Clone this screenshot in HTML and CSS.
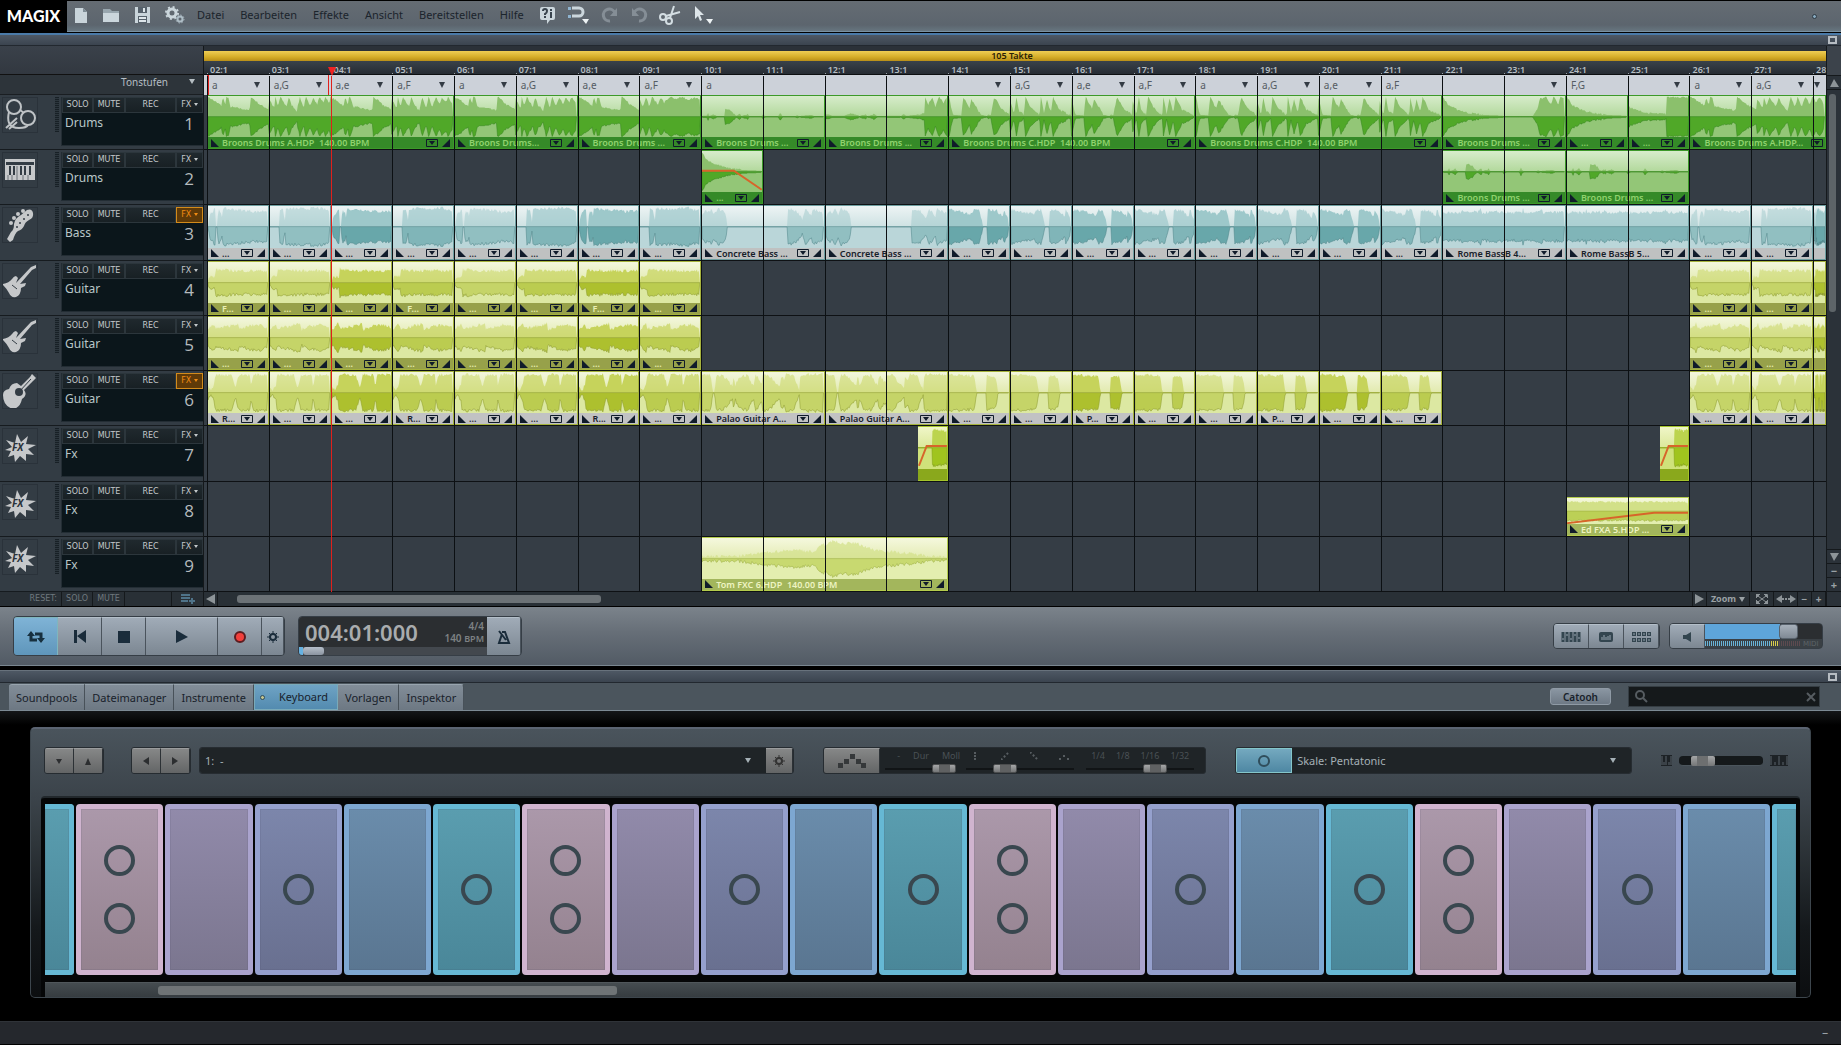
FILE: index.html
```
<!DOCTYPE html>
<html lang="de">
	<head>
		<meta charset="utf-8">
		<title>MAGIX Music Maker</title>
		<link rel="stylesheet" href="styles.css">
	</head>
	<body>
		<header class="menubar">
			<div class="logo">MAGIX</div>
			<div class="menu-tools">
				<button class="tool" aria-label="Neu"><svg width="14" height="17" viewBox="0 0 14 17"><path d="M1 1h8l4 4v11H1z" fill="#c9d4da"/><path d="M9 1v4h4z" fill="#7e8c95"/></svg></button>
				<button class="tool" aria-label="Öffnen"><svg width="18" height="15" viewBox="0 0 18 15"><path d="M1 1h7l2 2h7v3H1z" fill="#98a6ae"/><path d="M1 5h16v9H1z" fill="#cbd6dc"/></svg></button>
				<button class="tool" aria-label="Speichern"><svg width="17" height="18" viewBox="0 0 17 18"><path d="M1 1h15v16H1z" fill="#c9d4da"/><path d="M4 1h9v6H4zM4 10h9v7H4z" fill="#56616b"/><path d="M9 2h2v4H9zM5 11h7v2H5zM5 14h7v2H5z" fill="#dde5e9"/></svg></button>
				<button class="tool" aria-label="Einstellungen"><svg width="20" height="18" viewBox="0 0 20 18" fill="none"><circle cx="7" cy="7" r="4" stroke="#cbd6dc" stroke-width="3"/><circle cx="7" cy="7" r="6" stroke="#cbd6dc" stroke-width="2" stroke-dasharray="2 2.7"/><circle cx="15" cy="13" r="2.500" stroke="#aebdc6" stroke-width="2"/><circle cx="15" cy="13" r="4" stroke="#aebdc6" stroke-dasharray="1.500 1.600"/></svg></button>
			</div>
			<nav class="menus">
				<a href="#">Datei</a>
				<a href="#">Bearbeiten</a>
				<a href="#">Effekte</a>
				<a href="#">Ansicht</a>
				<a href="#">Bereitstellen</a>
				<a href="#">Hilfe</a>
			</nav>
			<div class="menu-tools modes">
				<button class="tool" aria-label="Hilfe"><svg width="17" height="19" viewBox="0 0 17 19"><path d="M3 1h11a2 2 0 0 1 2 2v9a2 2 0 0 1-2 2h-3l-3 4v-4H3a2 2 0 0 1-2-2V3a2 2 0 0 1 2-2z" fill="#cbd6dc"/><path d="M4 5q0-2 2-2t2 2-2 3v1M6 10v2M12 6v6M12 3v2" stroke="#39444e" stroke-width="2" fill="none"/></svg></button>
				<button class="tool" aria-label="Raster"><svg width="23" height="20" viewBox="0 0 23 20"><path d="M5 3h7a4 4 0 0 1 0 8H5" stroke="#cbd6dc" stroke-width="3" fill="none"/><path d="M1 2h3v3H1zM1 10h3v3H1z" fill="#8fb4d0"/><path d="M15 14h7l-3 5z" fill="#eef3f5"/></svg></button>
				<button class="tool" aria-label="Wiederholen"><svg width="18" height="18" viewBox="0 0 18 18"><path d="M9 15a6 6 0 1 1 5-8" stroke="#858e96" stroke-width="3" fill="none"/><path d="M16 2v8H9z" fill="#858e96"/></svg></button>
				<button class="tool" aria-label="Rückgängig"><svg width="18" height="18" viewBox="0 0 18 18"><path d="M9 15a6 6 0 1 0-5-8" stroke="#858e96" stroke-width="3" fill="none"/><path d="M2 2v8h7z" fill="#858e96"/></svg></button>
				<button class="tool" aria-label="Schneiden"><svg width="23" height="20" viewBox="0 0 23 20" fill="none" stroke="#d3dde2" stroke-width="2"><circle cx="4" cy="12" r="3"/><circle cx="10" cy="16" r="3"/><path d="M7 11l14-4M11 13L15 1"/></svg></button>
				<button class="tool" aria-label="Mausmodus"><svg width="22" height="20" viewBox="0 0 22 20"><path d="M2 1l9 9H7l2 5-2 1-2-5-3 3z" fill="#dde5e9"/><path d="M13 14h7l-3 5z" fill="#eef3f5"/></svg></button>
			</div>
			<span class="led"></span>
		</header>

		<div class="strip"><span class="restore"></span></div>

		<main class="arranger">
			<div class="heads">
				<div class="heads-top"></div>
				<div class="key-row"><button class="key-menu">Tonstufen <i class="down"></i></button></div>
				<div class="track-heads" id="heads"></div>
				<div class="reset-row">
					<span>RESET:</span><button>SOLO</button><button>MUTE</button><b></b>
					<button aria-label="Spur hinzufügen"><svg width="16" height="10" viewBox="0 0 16 10"><path d="M1 1h9M1 4h9M1 7h7M12 4v6M9 7h6" stroke="#4f7389" stroke-width="2"/></svg></button>
				</div>
			</div>

			<div class="timeline">
				<div class="range">105 Takte</div>
				<div class="bars ruler" id="ruler"></div>
				<div class="bars chords" id="chords"></div>
				<div class="lanes" id="lanes"></div>
				<div class="bars overlay" id="overlay"></div>
				<div class="hscroll">
					<button class="hs-btn" aria-label="Links"><svg width="9" height="10"><path d="M9 0v10L0 5z" fill="#8d9498"/></svg></button>
					<div class="hs-track"><div class="hs-thumb"></div></div>
					<button class="hs-btn" aria-label="Rechts"><svg width="9" height="10"><path d="M0 0v10l9-5z" fill="#8d9498"/></svg></button>
					<button class="hs-btn zoom">Zoom <i class="down"></i></button>
					<button class="hs-btn fit" aria-label="Alles zeigen"><svg width="12" height="10" viewBox="0 0 12 10"><path d="M1 0h3L0 4V1zM8 0h3l1 4zM0 6l4 4H0zM12 6v4H8zM2 2l8 6M10 2L2 8" fill="#8d9498" stroke="#8d9498"/></svg></button>
					<button class="hs-btn fit" aria-label="Bereich zeigen"><svg width="20" height="8" viewBox="0 0 20 8"><path d="M6 0v8L0 4zM14 0v8l6-4z" fill="#8d9498"/><path d="M6 4h8" stroke="#8d9498" stroke-width="2" stroke-dasharray="2 1"/></svg></button>
					<button class="hs-btn">−</button>
					<button class="hs-btn">+</button>
				</div>
			</div>

			<div class="vscroll">
				<div class="vs-head"></div>
				<button aria-label="Hoch"><svg width="9" height="8"><path d="M0 8h9L4 0z" fill="#8d9498"/></svg></button>
				<div class="vs-track"><div class="vs-thumb"></div></div>
				<button aria-label="Runter"><svg width="9" height="8"><path d="M0 0h9L4 8z" fill="#8d9498"/></svg></button>
				<button>−</button>
				<button>+</button>
				<div class="vs-foot"></div>
			</div>
		</main>

		<section class="transport">
			<div class="btn-group big">
				<button class="on w44" aria-label="Loop"><svg width="18" height="14" viewBox="0 0 18 14"><path d="M4 5v5h6M14 9V4H8" stroke="#17303f" stroke-width="3" fill="none"/><path d="M0 6l4-5 4 5zM10 8l4 5 4-5z" fill="#17303f"/></svg></button>
				<button class="w44" aria-label="Anfang"><svg width="12" height="13"><path d="M0 0h3v13H0zM12 0v13L3 6z" fill="#1a2c3b"/></svg></button>
				<button class="w44" aria-label="Stopp"><svg width="12" height="12"><path d="M0 0h12v12H0z" fill="#1a2c3b"/></svg></button>
				<button class="w73" aria-label="Wiedergabe"><svg width="12" height="13"><path d="M0 0v13l12-6z" fill="#1a2c3b"/></svg></button>
				<button class="w44" aria-label="Aufnahme"><svg width="14" height="14"><circle cx="7" cy="7" r="5" fill="#f2403c" stroke="#5d1c20" stroke-width="2"/></svg></button>
				<button class="w22" aria-label="Optionen"><svg width="12" height="12" viewBox="0 0 12 12" fill="none" stroke="#1a2c3b"><circle cx="6" cy="6" r="3" stroke-width="2"/><path d="M6 0v3M6 9v3M0 6h3M9 6h3M2 2l2 2M8 8l2 2M10 2L8 4M4 8l-2 2"/></svg></button>
			</div>
			<div class="btn-group big">
				<div class="display">
					<div class="time">
						<output>004:01:000</output>
						<div class="tempo"><span>4/4</span><span>140 <small>BPM</small></span></div>
					</div>
					<div class="position"><i></i></div>
				</div>
				<button class="w34" aria-label="Metronom"><svg width="14" height="14" viewBox="0 0 14 14" fill="none" stroke="#1a2c3b" stroke-width="2"><path d="M5 2h3l4 11H2l3-9M2 1l7 9"/></svg></button>
			</div>
			<div class="btn-group small right">
				<button class="w35" aria-label="Mixer"><svg width="20" height="10"><path d="M2 0v10M6 0v10M10 0v10M14 0v10M18 0v10" stroke="#33454f" stroke-width="3"/><path d="M1 7h2M9 7h2M5 3h2M13 3h2M17 6h2" stroke="#98a6b1"/></svg></button>
				<button class="w35" aria-label="Effekte"><svg width="14" height="10"><rect width="14" height="10" rx="2" fill="#33454f"/><path d="M3 8V5M5 8V3M7 8V5M9 8V4M11 8V3" stroke="#98a6b1"/></svg></button>
				<button class="w35" aria-label="Pads"><svg width="19" height="10"><path d="M0 2h19M0 8h19" stroke="#33454f" stroke-width="4" stroke-dasharray="4 1"/><path d="M1 2h19M1 8h19" stroke="#98a6b1" stroke-dasharray="2 3"/></svg></button>
			</div>
			<div class="btn-group small">
				<button class="w35" aria-label="Stumm"><svg width="8" height="10"><path d="M8 0v10L3 7H0V3h3z" fill="#33454f"/></svg></button>
				<div class="volume">
					<div class="vol-slider"><i></i></div>
					<div class="vol-meter"><i></i><span>MIDI</span></div>
				</div>
			</div>
		</section>

		<div class="strip gapped"><span class="restore"></span></div>

		<div class="tabbar">
			<div class="tabs">
				<button>Soundpools</button>
				<button>Dateimanager</button>
				<button>Instrumente</button>
				<button class="active"><i></i>Keyboard</button>
				<button>Vorlagen</button>
				<button>Inspektor</button>
			</div>
			<button class="catooh">Catooh</button>
			<label class="search">
				<svg width="13" height="13" viewBox="0 0 13 13" fill="none" stroke="#565c61" stroke-width="2"><circle cx="5" cy="5" r="4"/><path d="M8 8l4 4"/></svg>
				<input type="text" aria-label="Suche">
				<svg width="10" height="10" stroke="#565c61" stroke-width="2"><path d="M1 1l8 8M9 1L1 9"/></svg>
			</label>
		</div>

		<section class="stage">
			<div class="synth">
				<div class="synth-bar">
					<div class="gray-group"><button class="w29"><i class="down"></i></button><button class="w29"><i class="up"></i></button></div>
					<div class="gray-group nav"><button class="w29"><i class="left"></i></button><button class="w29"><i class="rightward"></i></button></div>
					<div class="gray-group preset">
						<div class="pick"><select aria-label="Preset"><option>1: &nbsp;-</option></select><i class="down"></i></div>
						<button class="w27" aria-label="Optionen"><svg width="12" height="12" viewBox="0 0 12 12" fill="none" stroke="#333"><circle cx="6" cy="6" r="3" stroke-width="2"/><path d="M6 0v3M6 9v3M0 6h3M9 6h3M2 2l2 2M8 8l2 2M10 2L8 4M4 8l-2 2"/></svg></button>
					</div>
					<div class="gray-group arp">
						<button class="w56" aria-label="Arpeggiator"><svg width="28" height="14" fill="#35383a"><path d="M0 9h5v5H0zM6 5h5v5H6zM12 0h5v5h-5zM18 5h5v5h-5zM23 9h5v5h-5z"/></svg></button>
						<div class="steps">
							<div class="opts s1"><span>-</span><span>Dur</span><span>Moll</span></div>
							<div class="rail s1"><i></i></div>
						</div>
						<div class="steps">
							<div class="opts s2">
								<svg width="8" height="8"><path d="M4 0v8" stroke-dasharray="2 1"/></svg>
								<svg width="8" height="8"><path d="M0 8l8-8" stroke-dasharray="2 2"/></svg>
								<svg width="8" height="8"><path d="M0 0l8 8" stroke-dasharray="2 2"/></svg>
								<svg width="10" height="8"><path d="M0 7h2M4 4h2M8 7h2"/></svg>
							</div>
							<div class="rail s2"><i></i></div>
						</div>
						<div class="steps">
							<div class="opts s3"><span>1/4</span><span>1/8</span><span>1/16</span><span>1/32</span></div>
							<div class="rail s3"><i></i></div>
						</div>
					</div>
					<div class="gray-group scale">
						<button class="w56 lit" aria-label="Skala"><svg width="14" height="14"><circle cx="7" cy="7" r="5" fill="none" stroke="#2f4d5b" stroke-width="2"/></svg></button>
						<div class="pick"><select aria-label="Skale"><option>Skale: Pentatonic</option></select><i class="down"></i></div>
					</div>
					<div class="key-size">
						<svg width="11" height="11"><path d="M0 0h11v11H0z" fill="#1d2226"/><path d="M3 7v3M8 7v3M1 1v9M10 1v9M5 1v9" stroke="#5b636a"/></svg>
						<div class="size-slider"><i></i></div>
						<svg width="18" height="11"><path d="M0 0h18v11H0z" fill="#1d2226"/><path d="M1 1v9M9 1v9M17 1v9M5 7v3M13 7v3" stroke="#5b636a"/></svg>
					</div>
				</div>
				<div class="keybed">
					<div class="keys" id="keys"></div>
					<div class="key-scroll"><div class="key-thumb"></div></div>
				</div>
			</div>
		</section>

		<footer class="statusbar">−</footer>
		<script src="script.js"></script>
	</body>
</html>
```

FILE: styles.css
```
* {
	box-sizing: border-box;
}
body {
	margin: 0;
	min-height: 100vh;
	display: flex;
	flex-direction: column;
	background: #000;
	color: #b6bec3;
	font: 11px/14px "Noto Sans", "Open Sans", sans-serif;
}
button, select, input {
	font: inherit;
	color: inherit;
	border: 0;
	padding: 0;
	margin: 0;
	background: none;
	border-radius: 0;
}
svg {
	display: block;
}
.down, .up, .left, .rightward {
	display: inline-block;
	width: 0;
	height: 0;
	border: 3px solid transparent;
}
.down {
	border-top: 5px solid currentColor;
	border-bottom: 0;
}
.up {
	border-bottom: 7px solid currentColor;
	border-top: 0;
}
.left {
	border-width: 4px;
	border-right: 6px solid currentColor;
	border-left: 0;
}
.rightward {
	border-width: 4px;
	border-left: 6px solid currentColor;
	border-right: 0;
}

/* menu */
.menubar {
	display: flex;
	align-items: center;
	height: 32px;
	border-top: 1px solid #000;
	background: linear-gradient(#656c73, #5c656e 80%, #66757f);
	border-bottom: 1px solid #7891a3;
}
.logo {
	width: 67px;
	height: 32px;
	background: #000;
	color: #fff;
	font: 900 16px/32px Lato, "Noto Sans", sans-serif;
	text-align: center;
}
.menu-tools {
	display: flex;
	align-items: center;
	gap: 14px;
	padding: 0 0 2px 7px;
}
.menu-tools.modes {
	gap: 11px;
	padding-left: 15px;
}
.menus {
	display: flex;
	gap: 16px;
	padding: 0 0 2px 12px;
}
.menus a {
	color: #1b242c;
	text-decoration: none;
	line-height: 28px;
}
.led {
	width: 5px;
	height: 5px;
	margin: 0 24px 0 auto;
	border-radius: 50%;
	background: #87a9bf;
	border: 1px solid #2d3942;
}
.strip {
	display: flex;
	justify-content: flex-end;
	align-items: center;
	height: 13px;
	padding-right: 4px;
	border-top: 2px solid #4a7aa8;
	border-bottom: 1px solid #22282f;
	background: linear-gradient(#4e5864, #3b444f);
	margin-top: 1px;
}
.strip.gapped {
	margin-top: 4px;
	border-top: 1px solid #68727c;
}
.restore {
	width: 9px;
	height: 8px;
	border: 2px solid #b6bcc2;
}

/* arranger */
.arranger {
	flex: 1;
	display: grid;
	grid-template-columns: 203px 1fr 15px;
	min-height: 520px;
	background: #2b3138;
}
.heads, .timeline, .vscroll {
	display: flex;
	flex-direction: column;
	min-width: 0;
}
.timeline {
	position: relative;
	border-left: 1px solid #14181b;
}
.heads-top {
	height: 29px;
	background: linear-gradient(#3a414a, #323840);
	border-bottom: 1px solid #111;
}
.key-row {
	height: 20px;
	background: #2d343a;
	display: flex;
	justify-content: flex-end;
	padding-right: 8px;
	border-bottom: 1px solid #1a1e22;
	font-size: 10px;
}
.key-menu {
	display: flex;
	gap: 21px;
	align-items: center;
	padding-bottom: 6px;
}
.track-heads, .lanes {
	flex: 1;
	display: grid;
	grid-auto-rows: 1fr;
}
.track {
	display: flex;
	background: #333c44;
	border-bottom: 1px solid #161b1f;
	padding: 2px 0 0 2px;
	min-height: 0;
}
.track-icon {
	width: 36px;
	height: 36px;
	border: 1px solid #2a323a;
}
.level {
	width: 4px;
	height: 35px;
	margin: 0 2px 0 17px;
	background: repeating-linear-gradient(#182026 0 1px, #2c363d 1px 2px);
}
.track-box {
	flex: 1;
	height: 49px;
	background: #0b161b;
	border-left: 1px solid #232d34;
	border-bottom: 1px solid #232d34;
}
.track-btns {
	display: grid;
	grid-template-columns: 31px 32px 51px 27px;
	height: 16px;
}
.track-btns button, .reset-row {
	font: 8px/8px "DejaVu Sans", sans-serif;
}
.track-btns button {
	background: linear-gradient(#20292e, #182024);
	border: 1px solid #2c363c;
	color: #c3c8ca;
	white-space: nowrap;
}
.track-btns .fx-on {
	background: #5f3a08;
	border-color: #d38b1b;
	color: #f08c14;
}
.track-btns .down {
	border-width: 3px 2px 0;
	vertical-align: middle;
}
.track-name {
	display: flex;
	justify-content: space-between;
	padding: 0 9px 0 3px;
	font-size: 12px;
	line-height: 20px;
	color: #b9c6c8;
}
.track-name b {
	font: 17px/22px "Open Sans", sans-serif;
	color: #b5babd;
}
.reset-row {
	display: grid;
	grid-template-columns: 61px 31px 32px 47px 1fr;
	align-items: center;
	height: 14px;
	color: #6f787e;
	background: #293036;
}
.reset-row span {
	text-align: right;
	padding-right: 4px;
}
.reset-row > * + * {
	height: 14px;
	border-left: 1px solid #15191c;
	display: grid;
	place-items: center;
}
.bars, .lane {
	display: grid;
	grid-template-columns: repeat(52, minmax(0, 50fr)) minmax(0, 21fr);
	padding-left: 3px;
	min-height: 0;
}
.range {
	margin-top: 5px;
	height: 10px;
	padding-right: 6px;
	background: linear-gradient(#efce55, #d5ad28 60%, #b98f18);
	font: 600 9px/10px "Noto Sans", sans-serif;
	color: #2a2105;
	text-align: center;
}
.ruler {
	height: 14px;
	background: linear-gradient(#3a424a, #262c33);
	border-bottom: 1px solid #0d0f11;
	font-size: 9px;
	font-weight: 600;
	line-height: 17px;
	overflow: hidden;
}
.ruler div {
	padding-left: 3px;
	white-space: nowrap;
	background: linear-gradient(#9aa3aa, #9aa3aa) 0 100% / 1px 5px no-repeat, linear-gradient(#9aa3aa, #9aa3aa) 50% 100% / 1px 3px no-repeat;
}
.chords {
	height: 20px;
	background: #ccd1d9;
	color: #555c63;
}
.chords button {
	display: flex;
	align-items: center;
	justify-content: space-between;
	padding: 0 9px 0 5px;
	font-size: 10px;
	overflow: hidden;
}
.chords button:first-child {
	box-shadow: inset 2px 0 #e0201c;
}
.chords button:nth-child(2) {
	background: linear-gradient(#e0201c, #e0201c) calc(100% - 2px) 0 / 1px 100% no-repeat;
}
.chords button:last-child {
	padding: 0 0 0 1px;
}
.chords .down {
	color: #333b44;
	border-width: 6px 3px 0;
}
.lane {
	background: #353d45;
	border-bottom: 1px solid #0e1114;
}
.clip {
	display: flex;
	flex-direction: column;
	min-width: 0;
	min-height: 0;
	margin-left: 1px;
	border: 1px solid var(--edge);
	border-left: 0;
	background: var(--foot);
	color: var(--ink);
}
.clip svg.wave {
	flex: 1 0 auto;
	width: 100%;
	height: 0;
	background: linear-gradient(var(--top), var(--mid) 49%, var(--low) 51%, var(--low));
}
.clip.low {
	margin-top: 15px;
}
.green { --top: #d7eccb; --mid: #b3d99d; --low: #93c677; --hi: #8bc06c; --lo: #50a828; --line: #348320; --foot: #358a28; --edge: #3c9929; --ink: #90d26e; }
.blue { --top: #edf4f4; --mid: #cee2e3; --low: #bad6d9; --hi: #9dc8ca; --lo: #68a7aa; --line: #4e8488; --foot: #bfc1c1; --edge: #6d9ea0; --ink: #17202a; }
.olive { --top: #f3f7dd; --mid: #e2eaaf; --low: #dce8a2; --hi: #c6d35b; --lo: #adc02e; --line: #8b9a2c; --foot: #97a14a; --edge: #a5b23c; --ink: #eaf0b4; }
.pale { --top: #f5f8de; --mid: #e4ecb4; --low: #e3eeaf; --hi: #d2e088; --lo: #bcd056; --line: #9aac40; --foot: #a3b65c; --edge: #b4cc4c; --ink: #eef4c2; }
.lime { --top: #f0f6c8; --mid: #dbe89a; --low: #cfe27a; --hi: #bcd44e; --lo: #a0c41e; --line: #7d9c14; --foot: #8aa81c; --edge: #a4c42a; --ink: #fff; }
.olive.silver {
	--foot: #c1c2c3;
	--ink: #17202a;
}
.hi {
	fill: var(--hi);
}
.lo {
	fill: var(--lo);
	stroke: var(--line);
	stroke-opacity: .5;
	vector-effect: non-scaling-stroke;
}
.dim1 .hi, .dim1 .lo {
	fill-opacity: .5;
}
.dim2 .hi, .dim2 .lo {
	fill-opacity: .7;
}
.auto {
	fill: none;
	stroke: #d7652a;
	stroke-width: 2;
	vector-effect: non-scaling-stroke;
}
.clip-foot {
	display: flex;
	align-items: center;
	height: 11px;
	padding: 0 3px;
	font: 600 9px/11px "Noto Sans", sans-serif;
	white-space: pre;
	color: inherit;
}
.clip-foot span {
	flex: 1;
	padding-left: 3px;
	overflow: hidden;
}
.clip-foot svg {
	flex: none;
}
.clip-foot svg + svg {
	margin-left: 4px;
}
.clip-foot.cut {
	padding: 0 2px 0 3px;
}
.overlay {
	position: absolute;
	left: 0;
	right: 0;
	top: 30px;
	bottom: 14px;
	pointer-events: none;
}
.overlay div {
	grid-row: 1;
	border-left: 1px solid #0c1013;
}
.overlay .playhead {
	border-left: 1px solid #e0201c;
	position: relative;
}
.playhead:before {
	content: "";
	position: absolute;
	left: -4px;
	top: -9px;
	border: 4px solid transparent;
	border-top: 9px solid #ee2222;
	border-bottom: 0;
}
.hscroll {
	display: flex;
	height: 14px;
	background: #293036;
	color: #9aa1a5;
}
.hs-btn {
	min-width: 14px;
	border-right: 1px solid #15191c;
	display: flex;
	align-items: center;
	justify-content: center;
	font-size: 10px;
	font-weight: 700;
	line-height: 14px;
}
.hs-btn.zoom {
	width: 43px;
	gap: 3px;
	font-size: 9px;
}
.hs-btn.fit {
	width: 24px;
}
.hs-track {
	flex: 1;
	padding: 3px 0 3px 19px;
	border-right: 1px solid #15191c;
}
.hs-thumb {
	width: 25%;
	height: 8px;
	border-radius: 3px;
	background: #6c7276;
}
.vscroll {
	background: #2b3239;
	border-left: 1px solid #15191c;
}
.vscroll button {
	display: grid;
	place-items: center;
	height: 14px;
	color: #9aa1a5;
	border-bottom: 1px solid #15191c;
	font-weight: 700;
	line-height: 12px;
}
.vs-head {
	height: 30px;
	background: #3c434b;
	border-bottom: 1px solid #15191c;
}
.vs-track {
	flex: 1;
	padding: 4px 4px 0 2px;
	border-bottom: 1px solid #15191c;
}
.vs-thumb {
	width: 7px;
	height: 48%;
	border-radius: 3px;
	background: #5d6468;
}
.vs-foot {
	height: 14px;
}

/* transport */
.transport {
	display: flex;
	align-items: center;
	height: 60px;
	padding: 0 18px 0 13px;
	border-top: 1px solid #000;
	border-bottom: 1px solid #7a8791;
	background: linear-gradient(#7b838b, #666e77 45%, #525b65);
}
.btn-group {
	display: flex;
	border: 1px solid #363e46;
	border-radius: 4px;
	overflow: hidden;
	margin-right: 13px;
}
.btn-group.right {
	margin-left: auto;
	margin-right: 9px;
}
.btn-group:last-child {
	margin-right: 0;
}
.btn-group.big {
	height: 40px;
}
.btn-group.small {
	height: 26px;
}
.btn-group button {
	display: grid;
	place-items: center;
	background: linear-gradient(#a0abb7, #7c8792);
	border-right: 1px solid #4a535c;
	border-top: 1px solid #b4bfc9;
}
.btn-group button.on {
	background: linear-gradient(#7fb3d6, #5f96bb);
	border-color: #7fb6bd;
}
.w22 { width: 22px; }
.w27 { width: 27px; }
.w29 { width: 29px; }
.w34 { width: 34px; }
.w35 { width: 35px; }
.w44 { width: 44px; }
.w56 { width: 56px; }
.w73 { width: 72px; }
.display {
	width: 188px;
	display: flex;
	flex-direction: column;
	background: #2b2e31;
}
.time {
	flex: 1;
	display: flex;
	justify-content: space-between;
	align-items: center;
	padding: 0 3px 0 6px;
}
.time output {
	font: 600 22px/28px "Noto Sans", sans-serif;
	color: #a9acae;
}
.tempo {
	display: flex;
	flex-direction: column;
	align-items: flex-end;
	font-size: 10px;
	font-weight: 600;
	line-height: 12px;
	color: #7d8183;
}
.tempo small {
	font-size: 9px;
}
.position {
	height: 8px;
	background: #43484e;
	border-left: 4px solid #66b2e2;
}
.position i {
	display: block;
	width: 21px;
	height: 8px;
	border-radius: 3px;
	background: linear-gradient(#b6bfca, #8b94a0);
}
.volume {
	width: 117px;
	background: #2c2f32;
}
.vol-slider {
	height: 15px;
	background: linear-gradient(90deg, #5ea5da 64%, #2b2e31 64%);
	padding-left: 74px;
}
.vol-slider i {
	display: block;
	width: 19px;
	height: 15px;
	border-radius: 3px;
	background: linear-gradient(#a7b0ba, #808a95);
	border: 1px solid #59636d;
}
.vol-meter {
	display: flex;
	align-items: center;
	height: 9px;
	background: #3a4045;
	font: 7px/8px "DejaVu Sans", sans-serif;
	color: #5d6468;
}
.vol-meter i {
	width: 95px;
	height: 5px;
	background: repeating-linear-gradient(90deg, transparent 0 1px, #3a4045 1px 2px), linear-gradient(90deg, #69b4d8 70%, #d8cc4c 70% 77%, #5d4a50 77%);
}
.vol-meter span {
	padding-left: 3px;
}

/* tabs */
.tabbar {
	display: flex;
	align-items: center;
	height: 28px;
	padding: 0 21px 0 9px;
	background: #4b555d;
	border-bottom: 1px solid #7c8a94;
}
.tabs {
	display: flex;
	align-self: flex-end;
	margin-right: auto;
}
.tabs button {
	height: 26px;
	padding: 0 7px;
	background: linear-gradient(#828d98, #6d7883);
	border-right: 1px solid #485159;
	border-top: 1px solid #98a4ae;
	color: #18212a;
}
.tabs button:first-child {
	border-radius: 3px 0 0 0;
}
.tabs button:last-child {
	border-radius: 0 3px 0 0;
}
.tabs .active {
	background: linear-gradient(#6fa3c4, #538bb0);
	border: 1px solid #79aab9;
	padding: 0 9px 0 5px;
}
.active i {
	display: inline-block;
	width: 5px;
	height: 5px;
	margin: 0 14px 1px 0;
	border-radius: 50%;
	background: #c4c58f;
	border: 1px solid #2d4a5a;
}
.catooh {
	width: 61px;
	height: 17px;
	border-radius: 3px;
	background: linear-gradient(#8a96a2, #6e7985);
	border: 1px solid #8f9aa5;
	color: #18212a;
	font-weight: 600;
	font-size: 10px;
	line-height: 14px;
}
.search {
	display: flex;
	align-items: center;
	width: 192px;
	height: 21px;
	margin-left: 17px;
	padding: 0 3px 0 6px;
	background: #15191b;
	border: 1px solid #353d43;
}
.search input {
	flex: 1;
	min-width: 0;
}

/* keyboard */
.stage {
	padding: 16px 30px 23px;
	background: linear-gradient(#141618, #000 14px);
}
.synth {
	border-radius: 5px;
	border: 1px solid #3d464d;
	border-top: 2px solid #5b6472;
	background: linear-gradient(#4a545c, #3b434a 70px, #30373c 110px, #14181b 200px, #0c0e10);
	padding: 0 10px;
}
.synth-bar {
	display: flex;
	align-items: center;
	padding: 18px 12px 22px 3px;
}
.gray-group {
	display: flex;
	height: 27px;
	border: 1px solid #262c31;
	border-radius: 3px;
	overflow: hidden;
	color: #2c2e30;
}
.gray-group button {
	display: grid;
	place-items: center;
	background: linear-gradient(#868787, #636566);
	border-right: 1px solid #2c3135;
	border-top: 1px solid #9a9c9d;
}
.gray-group.nav {
	margin-left: 27px;
}
.gray-group.preset {
	margin-left: 8px;
	flex: 595;
}
.gray-group.arp {
	margin-left: 29px;
	background: #1f2427;
	padding-right: 11px;
}
.gray-group.scale {
	margin-left: 29px;
	flex: 396;
}
.gray-group .lit {
	background: linear-gradient(#74a9bf, #4e87a3);
	border: 1px solid #84c6ca;
}
.pick {
	flex: 1;
	display: flex;
	align-items: center;
	padding-right: 15px;
	background: #1f2427;
	color: #a5b0b6;
}
.pick select {
	flex: 1;
	appearance: none;
	height: 25px;
	padding-left: 5px;
}
.steps {
	width: 108px;
	margin-left: 5px;
	color: #4a5155;
	font-size: 9px;
}
.steps:last-child {
	margin-left: 12px;
}
.opts {
	display: flex;
	justify-content: space-between;
	align-items: center;
	height: 14px;
	padding: 2px 5px 0;
	line-height: 12px;
}
.steps + .steps .opts {
	padding-right: 5px;
}
.opts.s1 {
	width: 75px;
	padding: 2px 0 0 12px;
	gap: 6px;
}
.opts svg {
	fill: none;
	stroke: #565c60;
	stroke-width: 2;
}
.rail {
	height: 2px;
	margin-top: 6px;
	background: #111416;
}
.rail i {
	display: block;
	position: relative;
	top: -4px;
	width: 24px;
	height: 9px;
	border-radius: 2px;
	background: linear-gradient(90deg, transparent 6px, #5f6162 6px 17px, transparent 17px), linear-gradient(#a5a6a7, #747677);
	border: 1px solid #4b4d4e;
}
.rail.s1 {
	width: 71px;
	padding-left: 47px;
}
.rail.s2 {
	padding-left: 27px;
}
.rail.s3 {
	padding-left: 57px;
}
.steps:nth-child(2) {
	width: 76px;
}
.key-size {
	display: flex;
	align-items: center;
	gap: 7px;
	margin-left: 29px;
}
.size-slider {
	width: 84px;
	height: 10px;
	padding-left: 12px;
	border-radius: 4px;
	background: #15191b;
	border-bottom: 1px solid #4b555c;
}
.size-slider i {
	display: block;
	width: 24px;
	height: 10px;
	border-radius: 2px;
	background: linear-gradient(90deg, transparent 6px, #6d6f70 6px 17px, transparent 17px), linear-gradient(#a5a6a7, #747677);
}
.keybed {
	padding: 6px 4px 0;
	background: #050607;
	border-top: 2px solid #22282c;
	border-radius: 4px 4px 0 0;
}
.keys {
	display: grid;
	grid-template-columns: 29fr repeat(19, 87fr) 24fr;
	gap: 2px;
	height: 171px;
}
.key {
	display: flex;
	flex-direction: column;
	align-items: center;
	justify-content: center;
	gap: 27px;
	min-width: 0;
	border: 5px solid;
	border-radius: 4px;
	background-clip: padding-box;
	box-shadow: inset 0 0 0 1px rgba(60,60,90,.1);
}
.key i {
	width: 31px;
	height: 31px;
	border: 4px solid #39474f;
	border-radius: 50%;
}
.key:first-child {
	border-left: 0;
	border-radius: 0 4px 4px 0;
}
.key:last-child {
	border-right: 0;
	border-radius: 4px 0 0 4px;
}
.key.teal { background: linear-gradient(#5a9daf, #4a8799); border-color: #66b8d4; }
.key.pink { background: linear-gradient(#ab98aa, #94828f); border-color: #d0b4cf; }
.key.purple { background: linear-gradient(#918aaa, #7b768f); border-color: #aaa3cd; }
.key.indigo { background: linear-gradient(#7c86ab, #697090); border-color: #95a0cd; }
.key.azure { background: linear-gradient(#6a8cab, #5a7691); border-color: #7da7d1; }
.key-scroll {
	height: 15px;
	margin-top: 7px;
	padding: 3px 0 0 113px;
	background: linear-gradient(#454c50, #363c40);
	border-top: 1px solid #50575b;
}
.key-thumb {
	width: 28%;
	height: 9px;
	border-radius: 3px;
	background: #6f7476;
}
.statusbar {
	height: 24px;
	padding-right: 13px;
	background: #25282d;
	border-top: 1px solid #2f3338;
	border-bottom: 1px solid #000;
	text-align: right;
	line-height: 22px;
}
```

FILE: script.js
```
// one envelope per bar: position in the bar, loudness
var shapes = {
	a1: [0,1, .22,.55, .24,1, .28,.6, .3,1, .34,.9, .36,.5, .55,.4, .68,.3, .7,1, .85,.6, 1,.35],
	a2: [0,.9, .08,.4, .1,1, .14,.5, .18,1, .28,.5, .32,1, .36,.6, .45,.3, .5,1, .56,.45, .6,1, .66,.5, .72,1, .78,.6, .82,1, .88,.7, .92,1, 1,.6],
	a3: [0,.9, .05,.5, .1,1, .16,.5, .2,1, .3,.6, .34,1, .4,.7, .5,1, .6,.85, .7,1, .8,.8, .9,1, 1,.8],
	q1: [0,.03, .08,.04, .1,.15, .12,.03, .2,.12, .24,.02, .37,.02, .38,.4, .48,.3, .56,.03, .63,.15, .65,.02, .75,.13, .78,.02, 1,.03],
	q2: [0,.1, .04,.03, .26,.03, .28,.18, .32,.03, .54,.02, .56,.07, .6,.02, .8,.09, .84,.02, 1,.02],
	q3: [0,.1, .05,.1, .1,.05, .3,.05, .4,.15, .5,.12, .55,.03, .65,.12, .68,.02, .8,.12, .84,.03, 1,.02],
	q4: [0,.05, .24,.03, .28,.15, .32,.03, .5,.1, .62,.2, .63,1, .68,.6, .75,1, .8,.5, .86,1, .93,.7, 1,1],
	c1: [0,1, .06,.1, .2,.05, .23,1, .3,.6, .34,.4, .36,.9, .52,.1, .62,.02, .64,.12, .68,.03, .74,1, .84,.45, 1,.05],
	c2: [0,.8, .06,.1, .1,1, .14,.3, .22,.1, .25,1, .33,.5, .48,.05, .5,1, .55,.15, .6,.9, .66,.2, .7,1, .8,.35, 1,.05],
	d1: [0,1, .08,.6, .2,.4, .4,.2, .7,.08, 1,.04],
	d2: [0,.03, .48,.03, .54,.3, .6,.9, .7,1, .78,.6, .82,1, .9,.6, .93,1, 1,.9],
	d3: [0,.5, .1,.35, .3,.18, .62,.12, .63,1, 1,1],
	b1: [0,0, .03,.6, .12,.9, .13,0, .16,0, .17,.85, .22,.7, .24,.4, .25,.9, .5,.85, .8,.75, 1,.8],
	b2: [0,0, .15,0, .16,.9, .22,.8, .25,.3, .26,.9, .6,.9, .8,.95, 1,.8],
	b3: [0,.5, .04,.8, .12,.7, .14,.9, .2,.6, .25,.9, .35,.8, .4,.5, .41,0, 1,0],
	b4: [0,0, .4,0, .41,.9, .55,.8, .65,.4, .7,.9, .8,.5, .82,.9, .95,.7, 1,.7],
	b5: [0,.85, .2,.75, .38,.6, .42,.85, .5,.85, .55,.3, .57,0, .64,0, .65,.85, .8,.8, .9,.5, .92,.85, 1,.3],
	b6: [0,.7, .3,.7, .31,.9, .34,.7, .6,.75, .61,.9, .64,.7, 1,.75],
	g1: [0,.1, .03,.3, .12,.3, .14,.9, .15,.65, .5,.6, .8,.6, 1,.6],
	g2: [0,.4, .1,.7, .13,.45, .3,.55, .5,.7, .52,.4, .7,.6, .85,.65, 1,.5],
	g3: [0,.3, .05,.1, .1,.4, .12,.9, .4,.9, .46,.25, .52,.9, .7,.9, .72,.3, .76,.9, 1,.9],
	p1: [0,.9, .14,.9, .18,.02, .2,.02, .24,.9, .35,.85, .5,.3, .52,.9, .55,.4, .62,.8, .75,.9, .85,.3, .88,.9, 1,.4],
	p2: [0,.9, .1,.9, .28,.2, .3,.8, .35,.7, .38,.9, .5,.9, .6,.1, .62,.9, 1,.95],
	p3: [0,.9, .42,.85, .46,.02, .62,.02, .63,.85, .78,.8, .82,.02, 1,.02],
	s1: [0,.02, .49,.02, .5,.9, 1,.85],
	e1: [0,.75, 1,.72],
	t1: [0,.12, .6,.12, 1,.3],
	t2: [0,.3, .5,.45, .85,.35, .95,.7, 1,.8],
	t3: [0,.7, .15,.9, .3,.75, .5,.8, .8,.45, 1,.4],
	t4: [0,.38, .4,.25, .8,.12, 1,.1]
};
var seed = 7;
function rnd() {
	seed = (seed * 16807) % 2147483647;
	return seed / 2147483647;
}
function envelope(names, jitter) {
	var pts = [];
	names.forEach(function (n, bar) {
		var s = shapes[n];
		for (var i = 0, x = 0; x < 60; x++) {
			var p = x / 60;
			while (i + 3 < s.length - 1 && s[i + 2] < p) i += 2;
			var k = (p - s[i]) / (s[i + 2] - s[i]);
			var v = s[i + 1] + (s[i + 3] - s[i + 1]) * Math.max(0, Math.min(1, k));
			if (v > .1) v += (rnd() - .5) * jitter;
			pts.push([bar * 60 + x, Math.max(.02, Math.min(1, v))]);
		}
	});
	return pts;
}
function wave(names, jitter, auto) {
	var w = names.length * 60, up = "M0 50", down = "M0 50";
	envelope(names, jitter).forEach(function (p) {
		up += "L" + p[0] + " " + (50 - p[1] * 48).toFixed(0);
		down += "L" + p[0] + " " + (50 + p[1] * 48).toFixed(0);
	});
	return '<svg class="wave" viewBox="0 0 ' + w + ' 100" preserveAspectRatio="none">' +
		'<path class="hi" d="' + up + 'L' + w + ' 50z"/><path class="lo" d="' + down + 'L' + w + ' 50z"/>' +
		(auto ? '<path class="auto" d="' + auto + '"/>' : '') + '</svg>';
}
var fadeIn = '<svg width="8" height="8"><path d="M0 0v8h8z" fill="#101b2a"/></svg>';
var fadeOut = '<svg width="8" height="8"><path d="M8 0v8H0z" fill="#101b2a"/></svg>';
var clipMenu = '<svg width="12" height="8"><path d="M.5.5h11v7H.5z" fill="none" stroke="#101b2a"/><path d="M3 2h6L6 6z" fill="#101b2a"/></svg>';

// start bar, length in bars, label, look, waves, automation line
function clip(c) {
	var cut = c[0] + c[1] > 26.2;
	var foot = "";
	if (c[2]) foot = fadeIn + "<span>" + c[2] + "</span>" + clipMenu + (cut ? "" : fadeOut);
	var end = cut ? 54 : (c[0] + c[1]) * 2 + 1;
	return '<div class="clip ' + c[3] + '" style="grid-column:' + (c[0] * 2 + 1) + "/" + end + '">' +
		wave(c[4], /green/.test(c[3]) ? .1 : .16, c[5]) +
		'<div class="clip-foot' + (cut ? " cut" : "") + '">' + foot + "</div></div>";
}
var dims = ["dim1", "dim1", "", "dim2", "dim1", "dim2", "", "dim2"];
function loops(from, to, labels, look, names) {
	var list = [];
	for (var b = from; b < to; b++) {
		var n = (b - from) % 8;
		list.push([b, 1, b == 26 ? "" : labels[n] || "...", look + " " + dims[n], [names[n % names.length]]]);
	}
	return list;
}
var full = "Broons Drums A.HDP  140.00 BPM", fullC = "Broons Drums C.HDP  140.00 BPM", short = "Broons Drums ...";
var tracks = [
	["Drums", "drums", [
		[0, 4, full, "green", ["a1", "a2", "a1", "a2"]],
		[4, 2, "Broons Drums...", "green", ["a1", "a2"]],
		[6, 2, short, "green", ["a1", "a3"]],
		[8, 2, short, "green", ["q1", "q2"]],
		[10, 2, short, "green", ["q3", "q4"]],
		[12, 4, fullC, "green", ["c1", "c2", "c1", "c2"]],
		[16, 4, fullC, "green", ["c1", "c2", "c1", "c2"]],
		[20, 2, short, "green", ["d1", "d2"]],
		[22, 1, "...", "green", ["d1"]],
		[23, 1, "...", "green", ["d3"]],
		[24, 3, "Broons Drums A.HDP...", "green", ["a1", "a2"]]]],
	["Drums", "keys", [
		[8, 1, "...", "green", ["d1"], "M0 48H32L60 94"],
		[20, 2, short, "green", ["q1", "q2"]],
		[22, 2, short, "green", ["q1", "q2"]]]],
	["Bass", "bass", loops(0, 8, [], "blue", ["b1", "b2"]).concat([
		[8, 2, "Concrete Bass ...", "blue dim1", ["b3", "b4"]],
		[10, 2, "Concrete Bass ...", "blue dim1", ["b3", "b4"]]],
		[12, 13, 14, 15, 16, 17, 18, 19].map(function (b) {
			return [b, 1, "...", "blue " + (b % 2 ? "dim2" : ""), ["b5"]];
		}), [
		[20, 2, "Rome BassB 4...", "blue dim2", ["b6", "b6"]],
		[22, 2, "Rome BassB 5...", "blue dim2", ["b6", "b6"]]],
		loops(24, 27, [], "blue", ["b1", "b2"]))],
	["Guitar", "electric", loops(0, 8, ["F...", "", "", "F...", "", "", "F..."], "olive", ["g1"]).concat(loops(24, 27, [], "olive", ["g1"]))],
	["Guitar", "electric", loops(0, 8, [], "olive", ["g2"]).concat(loops(24, 27, [], "olive", ["g2"]))],
	["Guitar", "acoustic", loops(0, 8, ["R...", "", "", "R...", "", "", "R..."], "olive silver", ["g3"]).concat([
		[8, 2, "Palao Guitar A...", "olive silver dim1", ["p1", "p2"]],
		[10, 2, "Palao Guitar A...", "olive silver dim1", ["p1", "p2"]]],
		loops(12, 20, ["", "", "P...", "", "", "P..."], "olive silver", ["p3"]),
		loops(24, 27, [], "olive silver", ["g3"]))],
	["Fx", "fx", [
		[11.5, .5, "", "lime", ["s1"], "M2 94L18 46H60"],
		[23.5, .5, "", "lime", ["s1"], "M2 94L18 46H60"]]],
	["Fx", "fx", [[22, 2, "Ed FXA 5.HDP ...", "pale low", ["e1", "e1"], "M0 96L86 56H120"]]],
	["Fx", "fx", [[8, 4, "Tom FXC 6.HDP  140.00 BPM", "pale dim2", ["t1", "t2", "t3", "t4"]]]]
];
var icons = {
	drums: '<g fill="none" stroke="#bfc3c6" stroke-width="2"><circle cx="11" cy="9" r="7"/><circle cx="25" cy="20" r="7"/><path d="M6 14c-2 8-1 16 10 16 5 0 8-1 9-3M17 12l4 3M3 30L14 20M6 31l8-7"/></g>',
	keys: '<path d="M2 6h30v21H2z" fill="#c6c8ca"/><path d="M3 9h28v3H3z" fill="#333c44"/><path d="M7 13v9M11 13v9M18 13v9M22 13v9M27 13v9" stroke="#333c44" stroke-width="2"/><path d="M5 22v5M9 22v5M14 13v14M20 22v5M25 22v5" stroke="#6a7177"/>',
	bass: '<path d="M4 31l4-7q3-2 3-8 1-6 7-9l6-5q5-2 6 3t-4 7q-4 2-5 6-2 4-6 5-3 2-5 9l-3 2z" fill="#c6c8ca"/><g fill="#c6c8ca"><circle cx="20" cy="3" r="2"/><circle cx="15" cy="6" r="2"/><circle cx="11" cy="10" r="2"/><circle cx="8" cy="15" r="2"/></g><g fill="#333c44"><circle cx="25" cy="7" r="1"/><circle cx="21" cy="11" r="1"/><circle cx="17" cy="15" r="1"/><circle cx="14" cy="19" r="1"/></g>',
	electric: '<path d="M0 20q6-1 9-5 2-3 4-3l2 2-2 5L28 3l5-2v3l-4 2-12 14 6-1-1 3-4 2q0 7-5 9-5 1-7-4-2-4-6-8z" fill="#c6c8ca"/><path d="M9 21l5 4" stroke="#333c44"/>',
	acoustic: '<path d="M0 21q0-5 6-6 2-6 8-6l4 3L27 3l2-3 4 4-3 3-9 9q4 5-2 9-2 9-9 10Q0 32 0 21z" fill="#c6c8ca"/><circle cx="16" cy="18" r="4" fill="#333c44"/><path d="M16 18L28 5" stroke="#333c44"/>',
	fx: '<path d="M2 21l7-3-6-7 9 3 2-9 4 8 7-6-2 8 10 1-8 4 6 6-8-1 0 7-6-5-5 6-1-7-6 2 3-6z" fill="#c6c8ca"/><text x="9" y="22" font-family="Noto Sans" font-size="10" font-weight="700" font-style="italic" fill="#2b333a">FX</text>'
};
var heads = "", lanes = "";
tracks.forEach(function (t, i) {
	heads += '<div class="track"><svg class="track-icon" viewBox="0 0 34 34">' + icons[t[1]] + '</svg><i class="level"></i>' +
		'<div class="track-box"><div class="track-btns"><button>SOLO</button><button>MUTE</button><button>REC</button>' +
		'<button' + (i == 2 || i == 5 ? ' class="fx-on"' : "") + '>FX <i class="down"></i></button></div>' +
		'<div class="track-name"><span>' + t[0] + "</span><b>" + (i + 1) + "</b></div></div></div>";
	lanes += '<div class="lane">' + t[2].map(clip).join("") + "</div>";
});
document.getElementById("heads").innerHTML = heads;
document.getElementById("lanes").innerHTML = lanes;

var ruler = "", lines = "";
for (var b = 0; b < 27; b++) {
	var col = (b * 2 + 1) + "/" + (b == 26 ? 54 : b * 2 + 3);
	var name = b == 26 ? "28" : ("0" + (b + 2)).slice(-2) + ":1";
	ruler += '<div style="grid-column:' + col + '">' + name + "</div>";
	lines += "<div" + (b == 2 ? ' class="playhead"' : "") + ' style="grid-column:' + col + '"></div>';
}
document.getElementById("ruler").innerHTML = ruler;
document.getElementById("overlay").innerHTML = lines;

var chords = [[0, 1, "a"], [1, 1, "a,G"], [2, 1, "a,e"], [3, 1, "a,F"], [4, 1, "a"], [5, 1, "a,G"], [6, 1, "a,e"], [7, 1, "a,F"],
	[8, 5, "a"], [13, 1, "a,G"], [14, 1, "a,e"], [15, 1, "a,F"], [16, 1, "a"], [17, 1, "a,G"], [18, 1, "a,e"], [19, 3, "a,F"],
	[22, 2, "F,G"], [24, 1, "a"], [25, 1, "a,G"], [26, .5, ""]];
document.getElementById("chords").innerHTML = chords.map(function (c) {
	return '<button style="grid-column:' + (c[0] * 2 + 1) + "/" + ((c[0] + c[1]) * 2 + 1) + '">' +
		(c[2] ? "<span>" + c[2] + "</span>" : "") + '<i class="down"></i></button>';
}).join("");

// pentatonic pads, the root carries two rings
var colors = ["teal", "pink", "purple", "indigo", "azure"], rings = [1, 2, 0, 1, 0], keys = "";
for (var k = 0; k < 21; k++) {
	var n = k == 0 || k == 20 ? 0 : rings[k % 5];
	keys += '<div class="key ' + colors[k % 5] + '">' + "<i></i>".repeat(n) + "</div>";
}
document.getElementById("keys").innerHTML = keys;
```
